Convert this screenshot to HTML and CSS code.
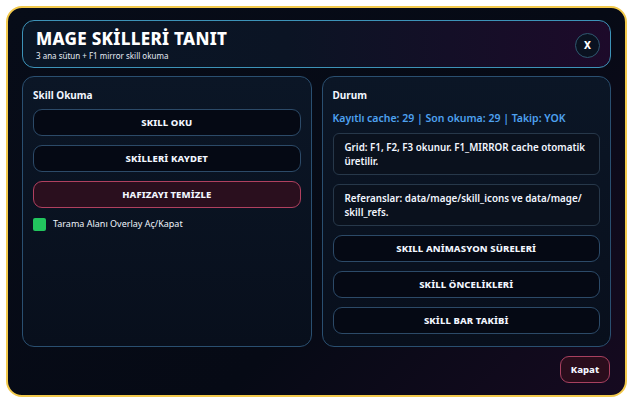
FILE: index.html
```html
<!DOCTYPE html>
<html lang="tr">
<head>
  <meta charset="UTF-8" />
  <meta name="viewport" content="width=device-width, initial-scale=1.0"/>
  <title>Mage Skilleri Tanıt</title>
  <link rel="stylesheet" href="styles.css">
</head>
<body>
  <div class="dialog">
    <div class="header">
      <div>
        <h1>MAGE SKİLLERİ TANIT</h1>
        <div class="subtitle">3 ana sütun + F1 mirror skill okuma</div>
      </div>
      <button class="close-x">X</button>
    </div>

    <div class="columns">
      <div class="panel">
        <div class="panel-title">Skill Okuma</div>
        <button class="btn">SKILL OKU</button>
        <button class="btn">SKİLLERİ KAYDET</button>
        <button class="btn danger">HAFIZAYI TEMİZLE</button>
        <label class="toggle">
          <span class="check"></span>
          Tarama Alanı Overlay Aç/Kapat
        </label>
      </div>

      <div class="panel">
        <div class="panel-title">Durum</div>
        <div class="status">Kayıtlı cache: 29 | Son okuma: 29 | Takip: YOK</div>
        <div class="info">Grid: F1, F2, F3 okunur. F1_MIRROR cache otomatik üretilir.</div>
        <div class="info">Referanslar: data/mage/skill_icons ve data/mage/ skill_refs.</div>
        <button class="btn">SKILL ANİMASYON SÜRELERİ</button>
        <button class="btn">SKİLL ÖNCELİKLERİ</button>
        <button class="btn">SKİLL BAR TAKİBİ</button>
      </div>
    </div>

    <div class="footer">
      <button class="btn-close">Kapat</button>
    </div>
  </div>
</body>
</html>
```

FILE: styles.css
```css
body {
  margin: 0;
  padding: 6px;
  background: #fff;
  font-family: 'Noto Sans', 'Open Sans', sans-serif;
  color: #f2f6ff;
}

.dialog {
  width: 621px;
  height: 391px;
  box-sizing: border-box;
  border: 2px solid #f2c94c;
  border-radius: 16px;
  padding: 12px 14px 12px 14px;
  background: linear-gradient(135deg, #070c18 0%, #060a15 60%, #160a20 100%);
  display: flex;
  flex-direction: column;
  gap: 8px;
}

.header {
  height: 48px;
  box-sizing: border-box;
  border: 1px solid #3d93b8;
  border-radius: 12px;
  background: linear-gradient(to right, #0a1626 0%, #0b1424 45%, #1d0a2a 100%);
  display: flex;
  align-items: center;
  justify-content: space-between;
  padding: 2px 10px 0 13px;
}

h1 {
  margin: 0;
  font-size: 17px;
  font-weight: 800;
  line-height: 20px;
  letter-spacing: 0.3px;
  color: #fff;
}

.subtitle {
  font-size: 8px;
  line-height: 10px;
  margin-top: 2px;
  color: #e6ecf5;
}

.close-x {
  width: 25px;
  height: 25px;
  border-radius: 50%;
  border: 1px solid #2f5870;
  background: #0a1220;
  color: #fff;
  font-family: inherit;
  font-weight: 800;
  font-size: 10px;
  padding: 0;
}

.columns {
  display: flex;
  gap: 10px;
  height: 271px;
}

.panel {
  flex: 1;
  box-sizing: border-box;
  border: 1px solid #2a4f70;
  border-radius: 12px;
  background: linear-gradient(to bottom, #0b1626, #080f1c);
  padding: 10px 10px 0 10px;
  display: flex;
  flex-direction: column;
  gap: 9px;
}

.panel-title {
  font-size: 10px;
  font-weight: 700;
  line-height: 14px;
  margin-top: 1px;
  margin-bottom: -2px;
}

.btn {
  height: 27px;
  flex: none;
  border: 1px solid #2c4a68;
  border-radius: 9px;
  background: #050914;
  color: #f2f6ff;
  font-family: inherit;
  font-weight: 800;
  font-size: 9.5px;
  letter-spacing: 0.1px;
}

.btn.danger {
  border-color: #b0405f;
  background: #2a0f1e;
}

.toggle {
  display: flex;
  align-items: center;
  gap: 7px;
  font-size: 9px;
  line-height: 14px;
  color: #eef3fb;
}

.check {
  width: 13px;
  height: 13px;
  border-radius: 2px;
  background: #22c55e;
}

.status {
  font-size: 10.5px;
  font-weight: 600;
  color: #4ea1f0;
  line-height: 14px;
  margin-top: 2px;
  margin-bottom: -1px;
}

.info {
  height: 42px;
  box-sizing: border-box;
  border: 1px solid #27384a;
  border-radius: 6px;
  background: #0a111d;
  padding: 7px 2px 0 11px;
  font-size: 9.8px;
  font-weight: 600;
  line-height: 14px;
  color: #f2f6ff;
}

.footer {
  display: flex;
  justify-content: flex-end;
  margin-top: 1px;
  padding-right: 1px;
}

.btn-close {
  width: 50px;
  height: 27px;
  border: 1px solid #a8405f;
  border-radius: 9px;
  background: #2a0d1c;
  color: #f2f6ff;
  font-family: inherit;
  font-weight: 800;
  font-size: 9.5px;
  padding: 0;
}
```
